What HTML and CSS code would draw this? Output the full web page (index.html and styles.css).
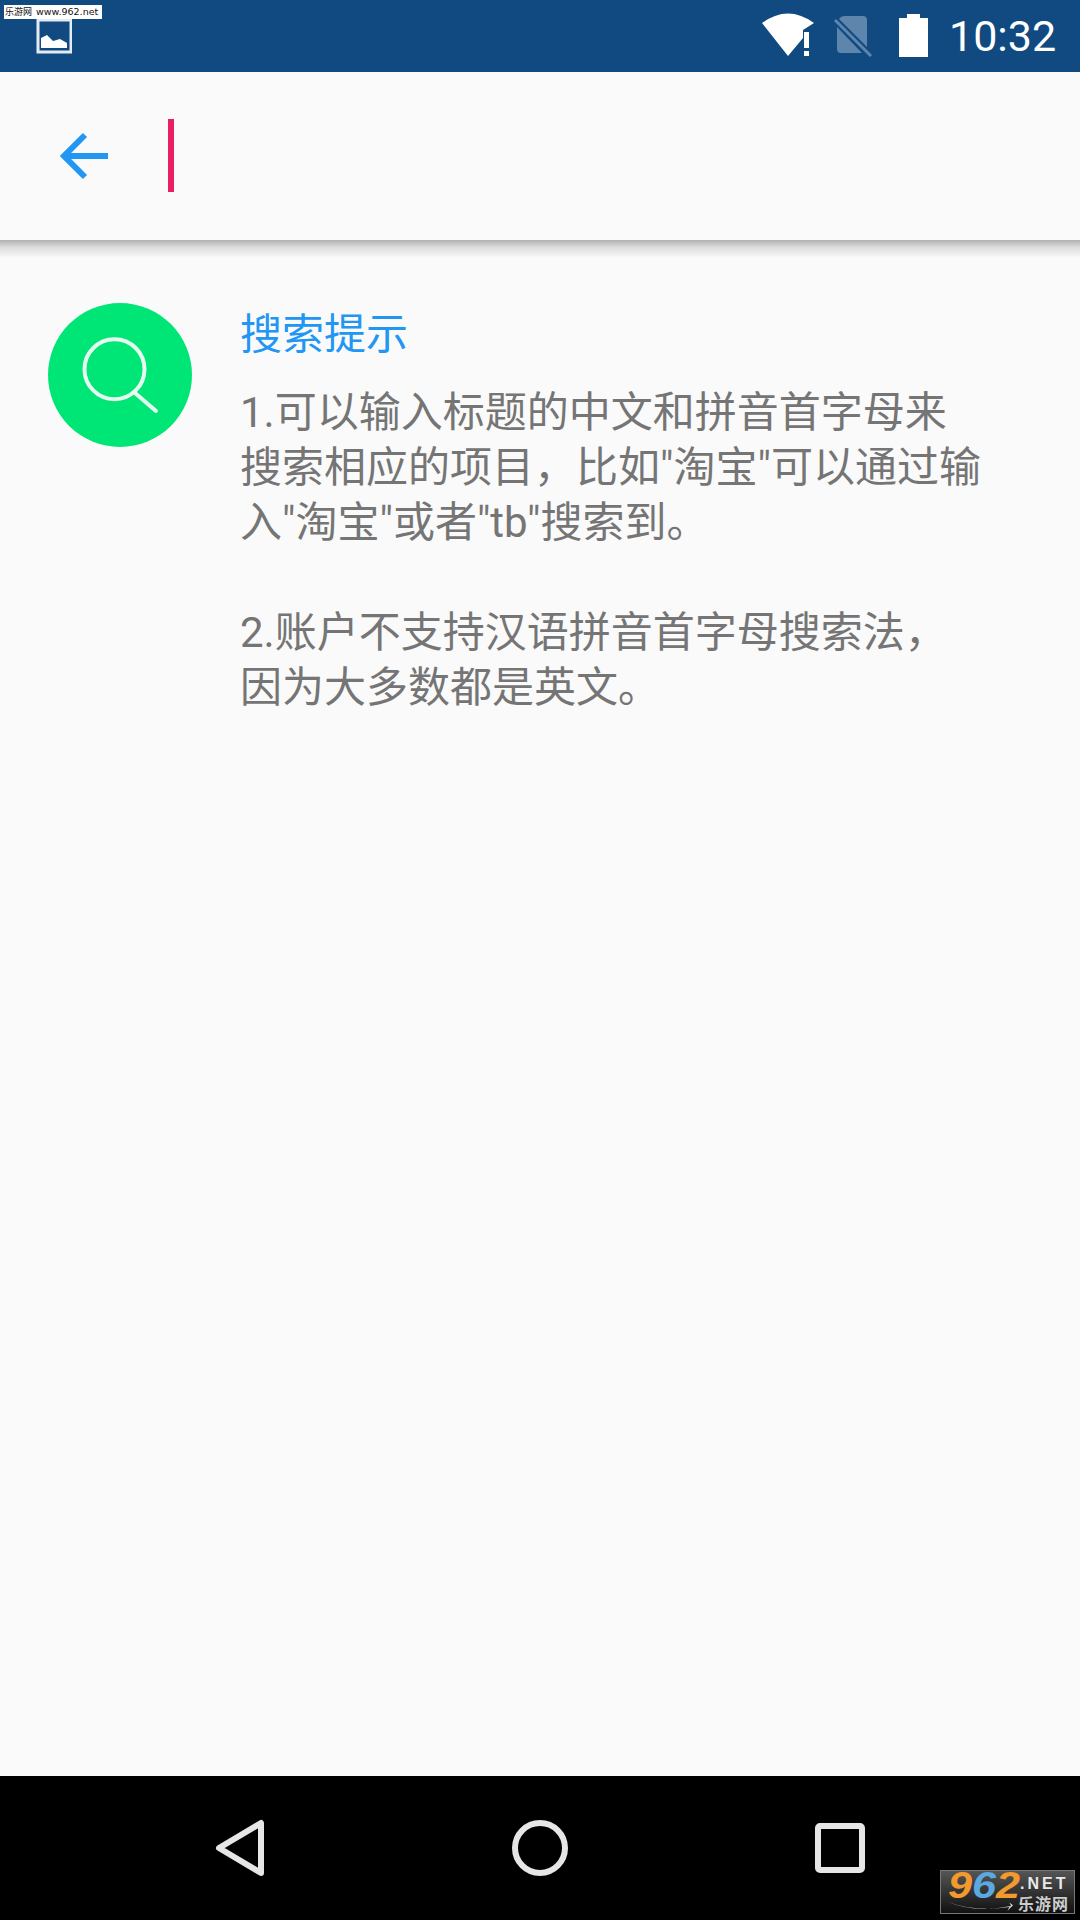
FILE: index.html

```html
<!DOCTYPE html>
<html lang="zh-CN">
<head>
    <meta charset="utf-8">
    <title>搜索提示</title>
    <link rel="stylesheet" href="styles.css">
</head>
<body>
    <div class="phone">
        <div class="status-bar">
            <svg class="status-pic" width="36" height="72" viewBox="0 0 36 72">
                <rect x="2" y="20" width="33" height="32" fill="none" stroke="#e4ebf2" stroke-width="3"/>
                <path d="M5 48V38L11 35L17 41L24 39L31 43V48Z" fill="#fff"/>
            </svg>
            <div class="status-icons">
                <svg width="56" height="72" viewBox="762 0 56 72">
                    <path d="M762 23Q788 4 814 23L803 30V38L788 56Z" fill="#fff"/>
                    <rect x="804" y="32" width="5" height="16" fill="#fff"/>
                    <rect x="804" y="51" width="5" height="5" fill="#fff"/>
                </svg>
                <svg class="status-sim" width="40" height="72" viewBox="832 0 40 72">
                    <path d="M845 16H863Q867 16 867 20V47L839 19Q841 16 845 16Z" fill="#5e86ad"/>
                    <path d="M837 27L862 53H841Q837 53 837 49Z" fill="#5e86ad"/>
                    <path d="M835 20L871 56" stroke="#5e86ad" stroke-width="3"/>
                </svg>
                <svg class="status-battery" width="29" height="72" viewBox="899 0 29 72">
                    <path d="M907 14H920V18H928V57H899V18H907Z" fill="#fff"/>
                </svg>
                <span class="status-time">10:32</span>
            </div>
        </div>

        <div class="search-bar">
            <svg class="back-arrow" width="48" height="52" viewBox="60 130 48 52">
                <path d="M108 156H65M85 135L64 156L85 177" fill="none" stroke="#2196f3" stroke-width="6"/>
            </svg>
            <div class="cursor"></div>
        </div>

        <div class="content">
            <div class="tip-icon">
                <svg width="144" height="144" viewBox="0 0 144 144">
                    <circle cx="66.5" cy="66.2" r="30" fill="none" stroke="#e6fcf0" stroke-width="4"/>
                    <path d="M87 90L108 108" fill="none" stroke="#e6fcf0" stroke-width="4" stroke-linecap="round"/>
                </svg>
            </div>
            <div class="tip-text">
                <h2 class="tip-title">搜索提示</h2>
                <p class="tip-body">1.可以输入标题的中文和拼音首字母来搜索相应的项目，比如"淘宝"可以通过输入"淘宝"或者"tb"搜索到。<br><br>2.账户不支持汉语拼音首字母搜索法，因为大多数都是英文。</p>
            </div>
        </div>

        <div class="nav-bar">
            <svg width="60" height="60" viewBox="0 0 60 60">
                <path d="M9 30L51 5V55Z" fill="none" stroke="#e6e6e6" stroke-width="6" stroke-linejoin="round"/>
            </svg>
            <svg width="60" height="60" viewBox="0 0 60 60">
                <circle cx="30" cy="30" r="25" fill="none" stroke="#e6e6e6" stroke-width="6"/>
            </svg>
            <svg width="60" height="60" viewBox="0 0 60 60">
                <rect x="8" y="8" width="44" height="44" rx="2" fill="none" stroke="#e6e6e6" stroke-width="6"/>
            </svg>
        </div>

        <div class="mark-top"><span class="mark-top-cn">乐游网</span><span class="mark-top-url">www.962.net</span></div>
        <div class="mark-logo">
            <div class="mark-num"><span class="o">9</span><span class="b">6</span><span class="o">2</span></div>
            <div class="mark-side">
                <div class="mark-net">.NET</div>
                <div class="mark-cn">乐游网</div>
            </div>
            <svg class="mark-swoosh" width="66" height="14" viewBox="0 0 72 14">
                <path d="M0 1Q30 14 70 6L68 2L72 5L66 11L68 7Q30 13 0 1Z" fill="#ddd"/>
            </svg>
        </div>
    </div>
</body>
</html>
```

FILE: styles.css

```css
* {
    box-sizing: border-box;
}
body {
    margin: 0;
    background: #fafafa;
    font-family: Roboto, "Noto Sans CJK SC", sans-serif;
}
.phone {
    position: relative;
    width: 1080px;
    height: 1920px;
    display: flex;
    flex-direction: column;
    overflow: hidden;
}

/* top status bar */
.status-bar {
    height: 72px;
    background: #114a80;
    display: flex;
    padding-left: 36px;
    padding-right: 25px;
}
.status-icons {
    margin-left: auto;
    display: flex;
}
.status-sim {
    margin-left: 14px;
}
.status-battery {
    margin-left: 27px;
}
.status-time {
    width: 106px;
    margin-left: 21px;
    color: #fff;
    font-size: 43px;
    line-height: 72px;
}

/* search header */
.search-bar {
    height: 168px;
    background: #fafafa;
    display: flex;
    align-items: center;
    padding-left: 60px;
    position: relative;
}
.search-bar::after {
    content: "";
    position: absolute;
    left: 0;
    right: 0;
    top: 100%;
    height: 18px;
    background: linear-gradient(#b0b0b0, #dcdcdc 40%, #fafafa);
}
.back-arrow {
    flex: none;
}
.cursor {
    width: 6px;
    height: 73px;
    margin-left: 60px;
    margin-bottom: 2px;
    background: #e91e63;
}

/* tip block */
.content {
    flex: 1;
    display: flex;
    align-items: flex-start;
    padding: 63px 0 0 48px;
}
.tip-icon {
    width: 144px;
    height: 144px;
    border-radius: 50%;
    background: #00e676;
    flex: none;
}
.tip-icon svg {
    display: block;
}
.tip-text {
    width: 745px;
    margin-left: 48px;
    padding-top: 4px;
}
.tip-title {
    margin: 0;
    color: #2196f3;
    font-size: 42px;
    font-weight: 400;
    line-height: 55px;
}
.tip-body {
    margin: 23px 0 0;
    color: #757575;
    font-size: 42px;
    line-height: 55px;
}

/* bottom navigation */
.nav-bar {
    height: 144px;
    background: #000;
    display: flex;
    justify-content: center;
    align-items: center;
    gap: 240px;
}

/* site watermarks */
.mark-top {
    position: absolute;
    left: 4px;
    top: 5px;
    width: 98px;
    height: 14px;
    background: #fff;
    color: #111;
    display: flex;
    gap: 4px;
    padding-left: 1px;
    line-height: 14px;
    white-space: nowrap;
}
.mark-top-cn {
    font-family: "Noto Sans CJK SC", sans-serif;
    font-size: 9px;
}
.mark-top-url {
    font-family: "DejaVu Sans", sans-serif;
    font-size: 9.5px;
}
.mark-logo {
    position: absolute;
    left: 940px;
    top: 1870px;
    width: 135px;
    height: 44px;
    border: 1px solid #777;
    background: linear-gradient(#555, #111);
    display: flex;
    padding-left: 7px;
}
.mark-num {
    width: 72px;
    font-family: "Liberation Sans", sans-serif;
    font-size: 36px;
    font-weight: 700;
    font-style: italic;
    line-height: 30px;
    transform: scaleX(1.2);
    transform-origin: left;
}
.mark-num .o {
    color: #f29a2e;
}
.mark-num .b {
    color: #5aa9e0;
}
.mark-net {
    color: #e8e8e8;
    font-family: "Liberation Sans", sans-serif;
    font-size: 16px;
    font-weight: 700;
    letter-spacing: 3px;
    line-height: 26px;
}
.mark-cn {
    margin-left: -2px;
    color: #ccc;
    font-family: "Noto Sans CJK SC", sans-serif;
    font-size: 16px;
    font-weight: 700;
    letter-spacing: 1px;
    line-height: 13px;
}
.mark-swoosh {
    position: absolute;
    left: 6px;
    top: 29px;
}
```
